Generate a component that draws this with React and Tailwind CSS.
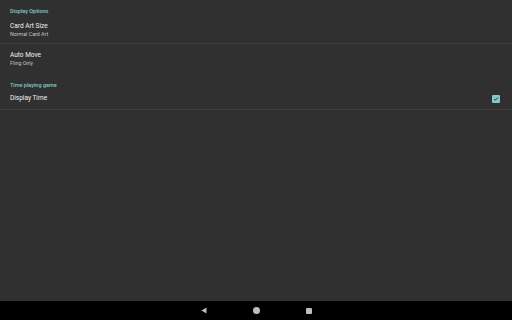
import React from 'react'

function CheckBox(){
  return (
    <div className="w-[8px] h-[8px] rounded-[1px] bg-[#80cbc4] flex items-center justify-center mr-[2px]">
      <svg width="6" height="6" viewBox="0 0 24 24"><path d="M4 12l5 5L20 6" stroke="#303030" strokeWidth="4" fill="none"/></svg>
    </div>
  )
}

export default function App(){
  return (
    <div className="w-[512px] h-[320px] bg-[#303030] flex flex-col" style={{fontFamily: 'Roboto, "Liberation Sans", sans-serif'}}>
      <div className="flex-1">
        <div className="px-[10px] pt-[6.5px] h-[14px] text-[5.5px] leading-[8px] text-[#80cbc4] font-medium">Display Options</div>
        <div className="h-[29px] pt-[7.5px] px-[10px]">
          <div className="text-[6.5px] leading-[9px] text-[#f0f0f0]">Card Art Size</div>
          <div className="text-[5.3px] leading-[7px] text-[#c4c4c4]">Normal Card Art</div>
        </div>
        <div className="h-px bg-[#3e3e3e]"></div>
        <div className="h-[30px] pt-[6.5px] px-[10px]">
          <div className="text-[6.5px] leading-[9px] text-[#f0f0f0]">Auto Move</div>
          <div className="text-[5.3px] leading-[7px] text-[#c4c4c4]">Fling Only</div>
        </div>
        <div className="px-[10px] pt-[6.5px] h-[14px] text-[5.5px] leading-[8px] text-[#80cbc4] font-medium">Time playing game</div>
        <div className="h-[21px] flex items-center px-[10px]">
          <div className="flex-1 text-[6.5px] leading-[9px] text-[#f0f0f0]">Display Time</div>
          <CheckBox />
        </div>
        <div className="h-px bg-[#3e3e3e]"></div>
      </div>
      <div className="h-[19px] bg-black flex items-center justify-center gap-[46px]">
        <svg width="6" height="7" viewBox="0 0 6 7"><path d="M5.5 0.5 L0.5 3.5 L5.5 6.5 Z" fill="#bdbdbd"/></svg>
        <div className="w-[7px] h-[7px] rounded-full bg-[#bdbdbd]"></div>
        <div className="w-[6px] h-[6px] rounded-[1px] bg-[#bdbdbd]"></div>
      </div>
    </div>
  )
}
